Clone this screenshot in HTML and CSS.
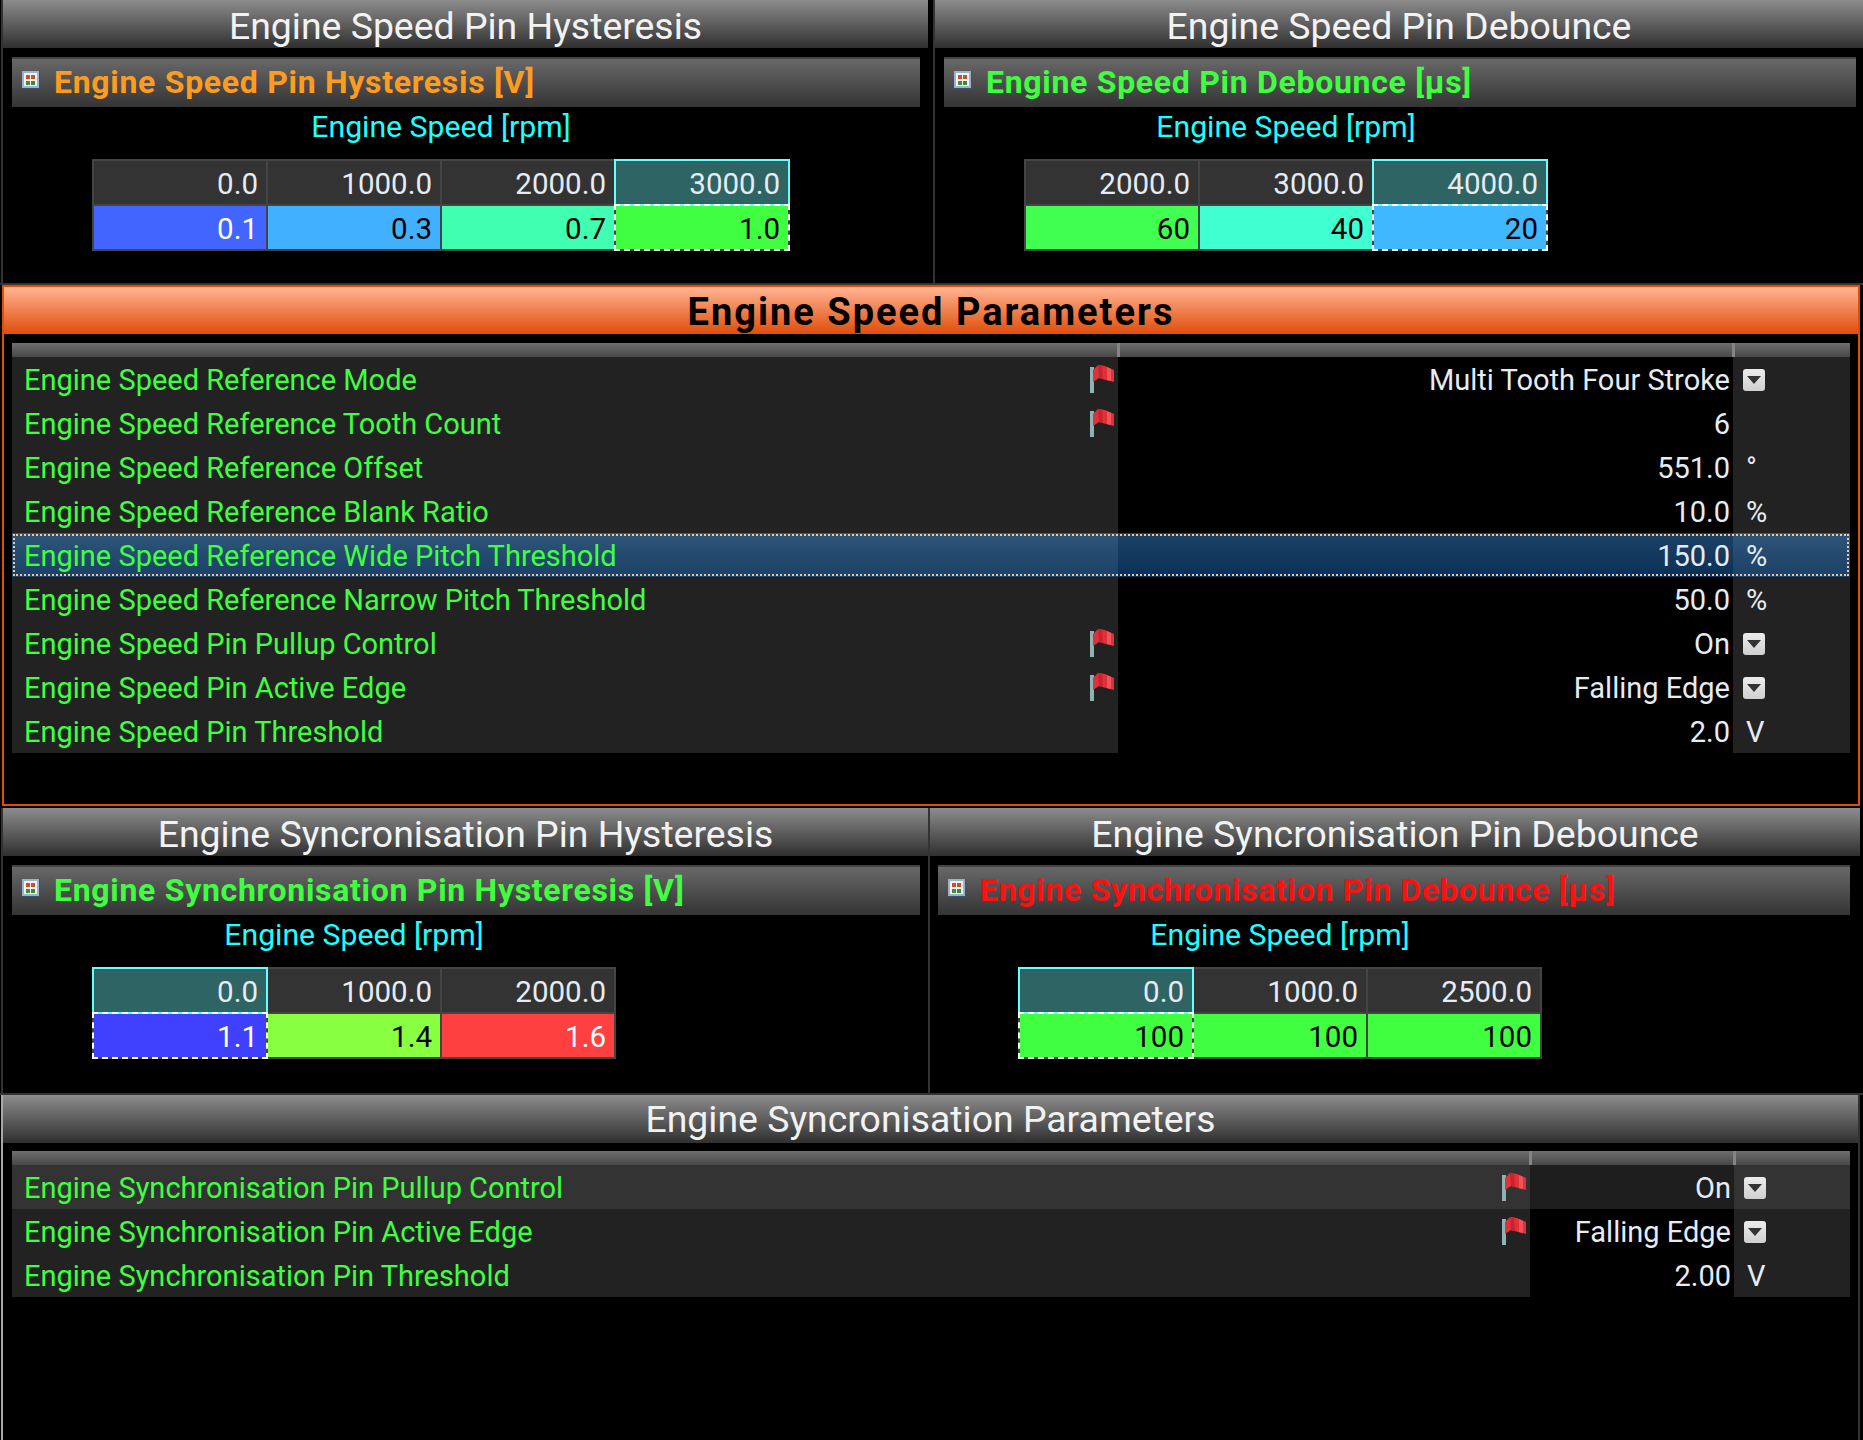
FILE: index.html
```html
<!DOCTYPE html>
<html lang="en">
<head>
    <meta charset="UTF-8">
    <title>Engine Speed</title>
    <link rel="stylesheet" href="styles.css">
</head>
<body>
    <svg class="defs" width="0" height="0">
        <symbol id="grid" viewBox="0 0 18 18">
            <rect width="18" height="18" fill="#3d5068"/>
            <rect x="0" y="0" width="17" height="17" fill="#9db2cc"/>
            <rect x="2" y="2" width="13" height="13" fill="#f2f2f2"/>
            <rect x="4" y="4" width="4" height="4" fill="#d2492a"/>
            <rect x="9" y="4" width="4" height="4" fill="#c9502f"/>
            <rect x="4" y="10" width="4" height="4" fill="#3f8f3f"/>
            <rect x="9" y="10" width="4" height="4" fill="#3a8a3a"/>
        </symbol>
        <symbol id="flag" viewBox="0 0 24 28">
            <rect x="0" y="2" width="4" height="26" fill="#8fb3b3"/>
            <path d="M3 5 L8 0 L15 1 L24 5 V17 L16 15 L9 13 L3 17Z" fill="#e0303a"/>
            <path d="M8 0 L12 0 L13 14 L9 13Z" fill="#c8242e"/>
            <path d="M17 2 L21 4 V16 L17 15Z" fill="#f0545a"/>
        </symbol>
    </svg>

    <div class="row row-top">
        <section class="panel panel-left">
            <h2 class="title">Engine Speed Pin Hysteresis</h2>
            <div class="subtitle orange"><svg class="grid-icon"><use href="#grid"/></svg>Engine Speed Pin Hysteresis [V]</div>
            <div class="mapwrap">
                <div class="axis">Engine Speed [rpm]</div>
                <div class="map cols-4">
                    <div class="cell head">0.0</div>
                    <div class="cell head">1000.0</div>
                    <div class="cell head">2000.0</div>
                    <div class="cell head current">3000.0</div>
                    <div class="cell c-blue light">0.1</div>
                    <div class="cell c-sky">0.3</div>
                    <div class="cell c-mint">0.7</div>
                    <div class="cell c-green focus">1.0</div>
                </div>
            </div>
        </section>
        <section class="panel panel-right">
            <h2 class="title">Engine Speed Pin Debounce</h2>
            <div class="subtitle green"><svg class="grid-icon"><use href="#grid"/></svg>Engine Speed Pin Debounce [µs]</div>
            <div class="mapwrap">
                <div class="axis">Engine Speed [rpm]</div>
                <div class="map cols-3">
                    <div class="cell head">2000.0</div>
                    <div class="cell head">3000.0</div>
                    <div class="cell head current">4000.0</div>
                    <div class="cell c-green2">60</div>
                    <div class="cell c-aqua">40</div>
                    <div class="cell c-sky2 focus">20</div>
                </div>
            </div>
        </section>
    </div>

    <section class="params active">
        <h2 class="title">Engine Speed Parameters</h2>
        <table class="ptable speed">
            <colgroup><col class="c1"><col class="c2"><col class="c3"></colgroup>
            <tr class="phead"><th></th><th></th><th></th></tr>
            <tr><td class="name"><div class="namebox">Engine Speed Reference Mode<svg class="flag"><use href="#flag"/></svg></div></td><td class="val">Multi Tooth Four Stroke</td><td class="unit"><span class="drop"></span></td></tr>
            <tr><td class="name"><div class="namebox">Engine Speed Reference Tooth Count<svg class="flag"><use href="#flag"/></svg></div></td><td class="val">6</td><td class="unit"></td></tr>
            <tr><td class="name"><div class="namebox">Engine Speed Reference Offset</div></td><td class="val">551.0</td><td class="unit">°</td></tr>
            <tr><td class="name"><div class="namebox">Engine Speed Reference Blank Ratio</div></td><td class="val">10.0</td><td class="unit">%</td></tr>
            <tr class="selected"><td class="name"><div class="namebox">Engine Speed Reference Wide Pitch Threshold</div></td><td class="val">150.0</td><td class="unit">%</td></tr>
            <tr><td class="name"><div class="namebox">Engine Speed Reference Narrow Pitch Threshold</div></td><td class="val">50.0</td><td class="unit">%</td></tr>
            <tr><td class="name"><div class="namebox">Engine Speed Pin Pullup Control<svg class="flag"><use href="#flag"/></svg></div></td><td class="val">On</td><td class="unit"><span class="drop"></span></td></tr>
            <tr><td class="name"><div class="namebox">Engine Speed Pin Active Edge<svg class="flag"><use href="#flag"/></svg></div></td><td class="val">Falling Edge</td><td class="unit"><span class="drop"></span></td></tr>
            <tr><td class="name"><div class="namebox">Engine Speed Pin Threshold</div></td><td class="val">2.0</td><td class="unit">V</td></tr>
        </table>
    </section>

    <div class="row row-sync">
        <section class="panel panel-left">
            <h2 class="title">Engine Syncronisation Pin Hysteresis</h2>
            <div class="subtitle green"><svg class="grid-icon"><use href="#grid"/></svg>Engine Synchronisation Pin Hysteresis [V]</div>
            <div class="mapwrap">
                <div class="axis">Engine Speed [rpm]</div>
                <div class="map cols-3">
                    <div class="cell head current">0.0</div>
                    <div class="cell head">1000.0</div>
                    <div class="cell head">2000.0</div>
                    <div class="cell c-indigo light focus">1.1</div>
                    <div class="cell c-lime">1.4</div>
                    <div class="cell c-red light">1.6</div>
                </div>
            </div>
        </section>
        <section class="panel panel-right">
            <h2 class="title">Engine Syncronisation Pin Debounce</h2>
            <div class="subtitle red"><svg class="grid-icon"><use href="#grid"/></svg>Engine Synchronisation Pin Debounce [µs]</div>
            <div class="mapwrap">
                <div class="axis">Engine Speed [rpm]</div>
                <div class="map cols-3">
                    <div class="cell head current">0.0</div>
                    <div class="cell head">1000.0</div>
                    <div class="cell head">2500.0</div>
                    <div class="cell c-green focus">100</div>
                    <div class="cell c-green">100</div>
                    <div class="cell c-green">100</div>
                </div>
            </div>
        </section>
    </div>

    <section class="params last">
        <h2 class="title">Engine Syncronisation Parameters</h2>
        <table class="ptable sync">
            <colgroup><col class="c1"><col class="c2"><col class="c3"></colgroup>
            <tr class="phead"><th></th><th></th><th></th></tr>
            <tr class="hover"><td class="name"><div class="namebox">Engine Synchronisation Pin Pullup Control<svg class="flag"><use href="#flag"/></svg></div></td><td class="val">On</td><td class="unit"><span class="drop"></span></td></tr>
            <tr><td class="name"><div class="namebox">Engine Synchronisation Pin Active Edge<svg class="flag"><use href="#flag"/></svg></div></td><td class="val">Falling Edge</td><td class="unit"><span class="drop"></span></td></tr>
            <tr><td class="name"><div class="namebox">Engine Synchronisation Pin Threshold</div></td><td class="val">2.00</td><td class="unit">V</td></tr>
        </table>
    </section>
</body>
</html>
```

FILE: styles.css
```css
:root {
    --text: #e6ecf2;
    --green: #40ff40;
    --cyan: #20ffff;
}

* {
    margin: 0;
    padding: 0;
    box-sizing: border-box;
}

body {
    width: 1863px;
    height: 1440px;
    overflow: hidden;
    background-color: #000;
    color: var(--text);
    font-family: Roboto, "Liberation Sans", sans-serif;
    font-size: 29px;
}

.defs {
    position: absolute;
}

/* two panels side by side */
.row {
    display: flex;
}

.row-top {
    height: 285px;
    border-bottom: 2px solid #333;
}

.row-sync {
    height: 287px;
    margin-top: 2px;
    border-bottom: 2px solid #333;
}

.panel {
    border-left: 2px solid #333;
}

.panel-left {
    width: 927px;
    margin-left: 1px;
}

.row-top .panel-right {
    width: 930px;
    margin-left: 5px;
}

.row-sync .panel-right {
    width: 932px;
}

.title {
    height: 48px;
    line-height: 52px;
    text-align: center;
    font-size: 37.4px;
    font-weight: 400;
    color: #f2f2f2;
    background: linear-gradient(#8c8c8c, #303030);
}

.subtitle {
    display: flex;
    align-items: center;
    height: 50px;
    margin: 9px 8px 0 9px;
    padding-bottom: 2px;
    border-top: 2px solid #444;
    font-size: 32px;
    font-weight: 700;
    letter-spacing: 0.7px;
    background: linear-gradient(#686868, #343434);
}

.row-sync .panel-right .subtitle {
    margin-right: 10px;
    margin-left: 8px;
}

.row-top .panel-right .subtitle {
    margin-right: 7px;
}

.orange { color: #ff9c20; }
.green { color: var(--green); }
.red { color: #ff1010; }

.grid-icon {
    width: 18px;
    height: 18px;
    margin: 0 14px 4px 10px;
}

.mapwrap {
    display: inline-flex;
    flex-direction: column;
    align-items: center;
    margin-left: 89px;
}

.row-sync .panel-right .mapwrap {
    margin-left: 88px;
}

.axis {
    height: 52px;
    line-height: 40px;
    font-size: 30.2px;
    color: var(--cyan);
}

.map {
    display: grid;
    grid-auto-rows: 43px;
    gap: 2px;
    border: 2px solid #444;
    background-color: #444;
}

.cols-4 { grid-template-columns: repeat(4, 172px); }
.cols-3 { grid-template-columns: repeat(3, 172px); }

.cell {
    padding-right: 8px;
    line-height: 47px;
    text-align: right;
    font-size: 29.5px;
    color: #000;
}

.cell.head {
    background-color: #333;
    color: var(--text);
}

.cell.light { color: #fff; }

.cell.current {
    background-color: #2f6464;
    outline: 2px solid #66ffff;
}

.cell.focus {
    outline: 2px dashed #fff;
    background-clip: padding-box;
}

.c-blue { background-color: #4264ff; }
.c-sky { background-color: #40b0ff; }
.c-mint { background-color: #40ffb0; }
.c-green { background-color: #40ff40; }
.c-green2 { background-color: #40ff50; }
.c-aqua { background-color: #40ffd0; }
.c-sky2 { background-color: #40b8ff; }
.c-indigo { background-color: #4040ff; }
.c-lime { background-color: #88ff40; }
.c-red { background-color: #ff4040; }

/* parameter lists */
.params.active {
    height: 521px;
    margin: 0 3px 0 2px;
    border: 2px solid #e04d0a;
}

.params.active .title {
    height: 47px;
    line-height: 50px;
    font-size: 38px;
    font-weight: 700;
    letter-spacing: 2px;
    color: #000;
    background: linear-gradient(#ffb494, #e04d0a);
}

.params.last {
    height: 345px;
    margin: 0 3px 0 1px;
    border-left: 2px solid #a8a8a8;
    border-right: 2px solid #333;
}

.params.last .title {
    line-height: 49px;
}

.ptable {
    margin: 8px 0 0 9px;
    border-collapse: collapse;
    table-layout: fixed;
    width: 1838px;
}

.params.active .ptable {
    margin: 9px 0 0 8px;
}

.speed .c1 { width: 1106px; }
.speed .c2 { width: 615px; }
.speed .c3 { width: 117px; }

.sync .c1 { width: 1518px; }
.sync .c2 { width: 204px; }
.sync .c3 { width: 116px; }

.phead th {
    height: 14px;
    background: linear-gradient(#6e6e6e, #484848);
}

.phead th:not(:last-child) {
    border-right: 3px solid #858585;
}

.ptable td {
    height: 44px;
    padding-top: 2px;
    white-space: nowrap;
}

.name {
    padding-left: 12px;
    padding-right: 4px;
    color: var(--green);
    background-color: #222;
}

.namebox {
    display: flex;
    justify-content: space-between;
    align-items: center;
}

.val {
    padding-right: 3px;
    text-align: right;
    background-color: #000;
}

.unit {
    padding-left: 13px;
    background-color: #222;
}

.flag {
    width: 24px;
    height: 28px;
    margin-top: -2px;
}

.drop {
    display: block;
    position: relative;
    width: 22px;
    height: 22px;
    margin-left: -3px;
    border-radius: 3px;
    background: linear-gradient(#ececec, #d0d0d0);
}

.drop::after {
    content: '';
    position: absolute;
    left: 4px;
    top: 7px;
    border-left: 7px solid transparent;
    border-right: 7px solid transparent;
    border-top: 8px solid #333;
}

.selected {
    outline: 2px dotted #f0c8a0;
    outline-offset: -3px;
}

.selected .name,
.selected .unit {
    background: linear-gradient(#2f5578, #1a4068);
}

.selected .val {
    background: linear-gradient(#1d4266, #0a3058);
}

.hover .name,
.hover .unit {
    background-color: #333;
}

.hover .val {
    background-color: #1e1e1e;
}
```
